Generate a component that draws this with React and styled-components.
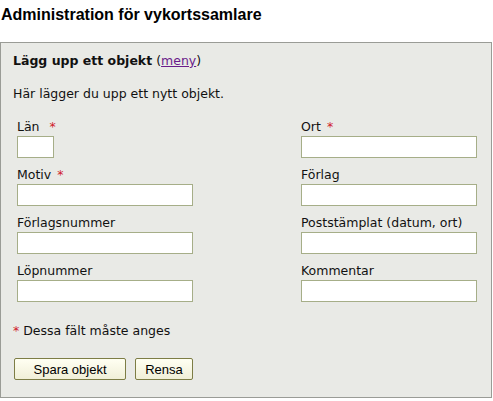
import React from 'react';
import styled, { createGlobalStyle } from 'styled-components';

const Global = createGlobalStyle`
  body { margin: 0; background: #fff; font-family: Verdana, "DejaVu Sans", sans-serif; font-size: 12.5px; color: #111; }
`;

const leftFields = [
  { label: 'Län', req: true, narrow: true },
  { label: 'Motiv', req: true },
  { label: 'Förlagsnummer' },
  { label: 'Löpnummer' },
];
const rightFields = [
  { label: 'Ort', req: true },
  { label: 'Förlag' },
  { label: 'Poststämplat (datum, ort)' },
  { label: 'Kommentar' },
];

function App() {
  const rows = leftFields.map((l, i) => [l, rightFields[i]]);
  return (
    <Page>
      <Global />
      <Heading>Administration för vykortssamlare</Heading>
      <Panel>
        <SubTitle>
          <b>Lägg upp ett objekt</b> (<MenuLink href="#">meny</MenuLink>)
        </SubTitle>
        <Intro>Här lägger du upp ett nytt objekt.</Intro>
        <Grid>
          {rows.map(([l, r]) => (
            <React.Fragment key={l.label}>
              <Field>
                <Label>{l.label}{l.req && <Star $gap={l.narrow ? 10 : 6}>*</Star>}</Label>
                <Input $narrow={l.narrow} />
              </Field>
              <Field>
                <Label>{r.label}{r.req && <Star $gap={6}>*</Star>}</Label>
                <Input />
              </Field>
            </React.Fragment>
          ))}
        </Grid>
        <Note><Star $gap={0}>*</Star> Dessa fält måste anges</Note>
        <Buttons>
          <Button $w={112}>Spara objekt</Button>
          <Button $w={58}>Rensa</Button>
        </Buttons>
      </Panel>
    </Page>
  );
}

const Page = styled.div`
  width: 493px;
  height: 401px;
  overflow: hidden;
`;

const Heading = styled.h1`
  margin: 0;
  padding: 6px 0 0 1px;
  height: 37px;
  box-sizing: border-box;
  font-family: "Liberation Sans", Arial, sans-serif;
  font-size: 16px;
  font-weight: bold;
  color: #000;
`;

const Panel = styled.div`
  margin-top: 5px;
  width: 492px;
  height: 356px;
  box-sizing: border-box;
  background: #e9eae6;
  border: 1px solid #9a9c96;
  padding: 10px 12px 0 12px;
`;

const SubTitle = styled.div`
  line-height: 16px;
`;

const MenuLink = styled.a`
  color: #6a1b8a;
`;

const Intro = styled.div`
  margin-top: 17px;
  line-height: 16px;
`;

const Grid = styled.div`
  margin-top: 14px;
  display: grid;
  grid-template-columns: 284px 176px;
  row-gap: 6px;
  padding-left: 4px;
`;

const Field = styled.div`
  display: flex;
  flex-direction: column;
`;

const Label = styled.div`
  line-height: 15px;
  height: 18px;
  padding-top: 3px;
  box-sizing: border-box;
  margin-bottom: 2px;
`;

const Star = styled.span`
  color: #d0202a;
  margin-left: ${(p) => p.$gap}px;
`;

const Input = styled.input`
  width: ${(p) => (p.$narrow ? 37 : 176)}px;
  height: 22px;
  box-sizing: border-box;
  border: 1px solid #a6ae88;
  background: #fff;
  margin: 0;
`;

const Note = styled.div`
  margin-top: 21px;
  line-height: 16px;
`;

const Buttons = styled.div`
  display: flex;
  gap: 9px;
  margin-top: 19px;
  padding-left: 1px;
`;

const Button = styled.button`
  width: ${(p) => p.$w}px;
  height: 22px;
  border: 1px solid #7d7d45;
  border-radius: 2px;
  background: linear-gradient(#fffff2, #f0efd8);
  font-family: "Liberation Sans", Arial, sans-serif;
  font-size: 13px;
  color: #000;
  padding: 0;
`;

export default App;
